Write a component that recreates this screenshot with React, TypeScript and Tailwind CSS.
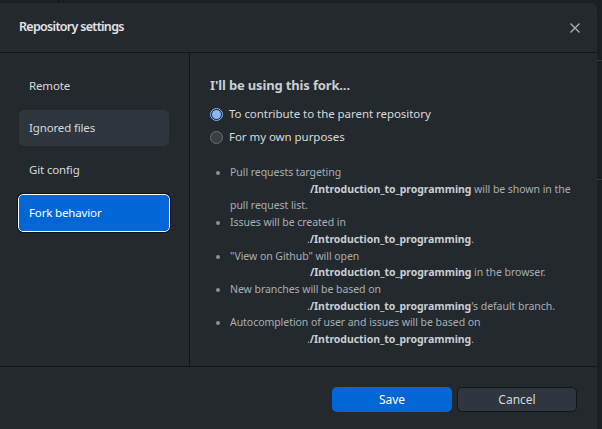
import React from "react";

const font = { fontFamily: '"Noto Sans", "Open Sans", Arial, sans-serif' };

function Repo({ prefix = "", suffix = "" }: { prefix?: string; suffix?: string }) {
  return (
    <>
      <span className={"inline-block " + (prefix ? "w-[77px]" : "w-[80px]")} />
      {prefix}
      <span className="font-bold text-[#c9ced3]">/Introduction_to_programming</span>
      {suffix}
    </>
  );
}

export default function App() {
  const items = ["Remote", "Ignored files", "Git config", "Fork behavior"];
  return (
    <div className="relative w-[602px] h-[429px] overflow-hidden bg-[#1b1f23]" style={font}>
      <div className="absolute left-[58px] top-0 h-[4px] w-px bg-[#111417]" />
      <div className="absolute right-0 top-[60px] w-[6px] h-[120px] border-t border-b border-[#2f363d]" />
      <div className="absolute left-[-6px] top-[3px] w-[603px] h-[432px] rounded-tr-[6px] bg-[#24292e] flex flex-col">
        <header className="h-[50px] shrink-0 flex items-center justify-between pl-[25px] pr-[16px] border-b border-[#141619]">
          <h1 className="text-[12.5px] font-semibold text-[#e1e4e8] tracking-[-0.7px]">Repository settings</h1>
          <svg width="12" height="12" viewBox="0 0 12 12" className="text-[#a8adb3]">
            <path d="M1.5 1.5 L10.5 10.5 M10.5 1.5 L1.5 10.5" stroke="currentColor" strokeWidth="1.4" />
          </svg>
        </header>
        <div className="flex h-[314px] shrink-0 border-b border-[#141619]">
          <nav className="w-[196px] shrink-0 border-r border-[#141619] pt-[15px] pl-[25px] pr-[20px] flex flex-col gap-[6px]">
            {items.map((it) => {
              const active = it === "Fork behavior";
              const hover = it === "Ignored files";
              return (
                <div
                  key={it}
                  className={
                    "flex items-center pl-[10px] rounded-[5px] text-[11.5px] tracking-[-0.15px] " +
                    (active
                      ? "h-[38px] bg-[#0366d6] text-white border border-white -ml-[1px] -mr-[1px] outline outline-1 outline-[#111]"
                      : hover
                      ? "h-[36px] bg-[#2f363d] text-[#d5d9dd]"
                      : "h-[36px] text-[#d5d9dd]")
                  }
                >
                  {it}
                </div>
              );
            })}
          </nav>
          <main className="flex-1 pl-[20px] pt-[22px] pr-[10px]">
            <h2 className="text-[13px] font-bold text-[#c9ced3] leading-[20px] tracking-[-0.15px]">I'll be using this fork...</h2>
            <div className="mt-[10px] flex flex-col gap-[5px] text-[11.5px] tracking-[-0.05px] text-[#d5d9dd]">
              <label className="flex items-center gap-[6px] h-[18px]">
                <span className="w-[13px] h-[13px] rounded-full border border-[#8ab4f8] bg-[#1f2a36] flex items-center justify-center">
                  <span className="w-[9px] h-[9px] rounded-full bg-[#8ab4f8]" />
                </span>
                To contribute to the parent repository
              </label>
              <label className="flex items-center gap-[6px] h-[18px]">
                <span className="w-[13px] h-[13px] rounded-full border border-[#6a6f74] bg-[#3b3f43]" />
                For my own purposes
              </label>
            </div>
            <ul className="mt-[18px] list-disc pl-[20px] text-[10.5px] tracking-[-0.05px] leading-[16.7px] text-[#a8aeb4] marker:text-[#8b9197]">
              <li>
                Pull requests targeting <br />
                <Repo suffix=" will be shown in the pull request list." />
              </li>
              <li>
                Issues will be created in <br />
                <Repo prefix="." suffix="." />
              </li>
              <li>
                "View on Github" will open <br />
                <Repo suffix=" in the browser." />
              </li>
              <li>
                New branches will be based on <br />
                <Repo prefix="." suffix="'s default branch." />
              </li>
              <li>
                Autocompletion of user and issues will be based on <br />
                <Repo prefix="." suffix="." />
              </li>
            </ul>
          </main>
        </div>
        <footer className="flex justify-end gap-[5px] pr-[20px] pt-[20px]">
          <button className="w-[120px] h-[25px] rounded-[5px] bg-[#0366d6] text-white text-[12px]">Save</button>
          <button className="w-[120px] h-[25px] rounded-[5px] bg-[#2f363d] border border-[#141619] text-[#d5d9dd] text-[12px]">Cancel</button>
        </footer>
      </div>
    </div>
  );
}
